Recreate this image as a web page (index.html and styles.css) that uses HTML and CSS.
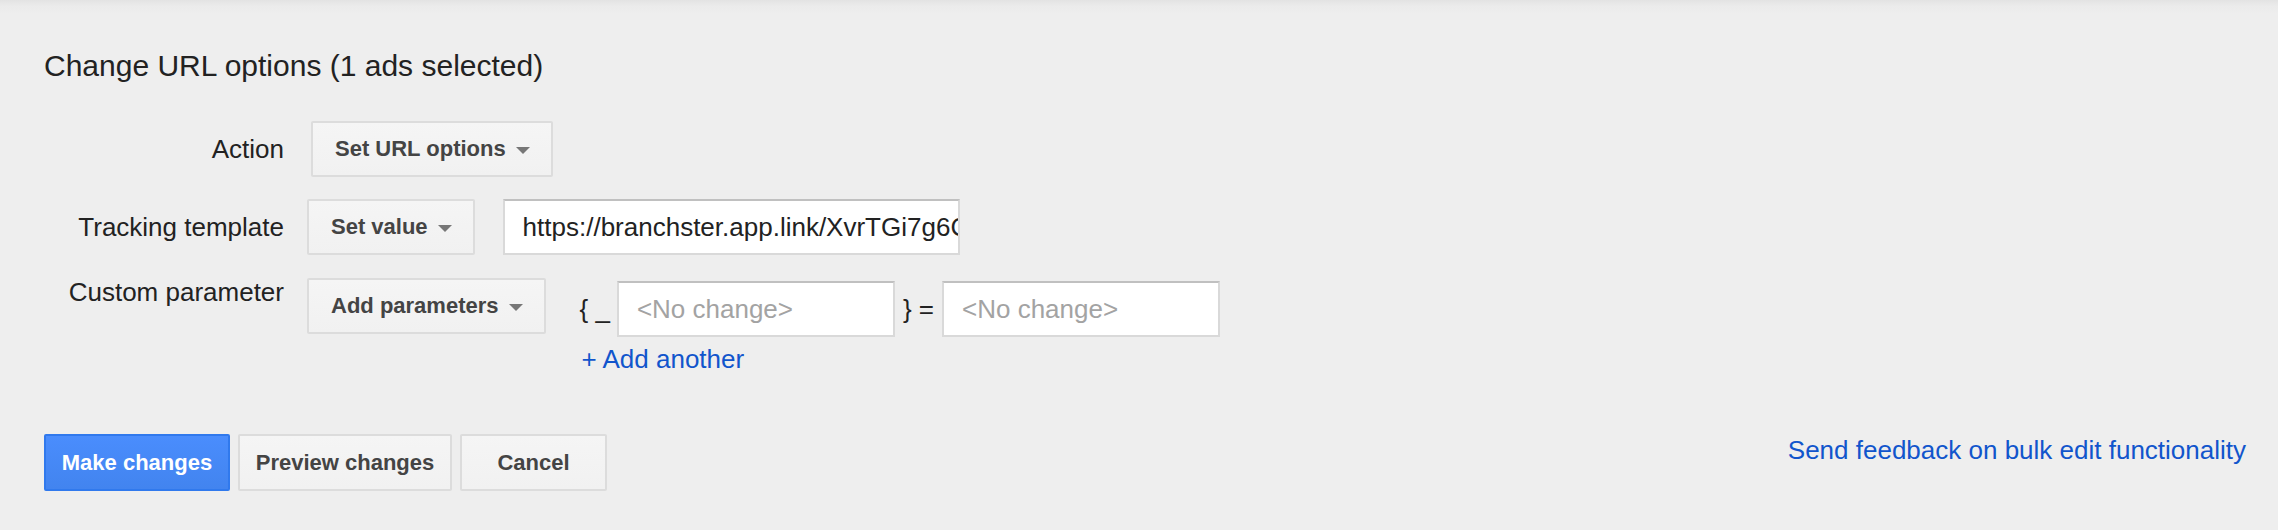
FILE: index.html
```html
<!DOCTYPE html>
<html>
<head>
<meta charset="utf-8">
<link rel="stylesheet" href="styles.css">
</head>
<body>
<div class="panel">
  <h1 class="title">Change URL options (1 ads selected)</h1>
  <div class="form">
    <div class="label label-mid">Action</div>
    <div class="controls">
      <button class="btn btn-dd btn-action">Set URL options <span class="caret"></span></button>
    </div>

    <div class="label label-mid">Tracking template</div>
    <div class="controls">
      <button class="btn btn-dd">Set value <span class="caret"></span></button>
      <div class="field field-url"><span class="field-text">https://branchster.app.link/XvrTGi7g6C1</span></div>
    </div>

    <div class="label label-top">Custom parameter</div>
    <div class="controls controls-top">
      <button class="btn btn-dd">Add parameters <span class="caret"></span></button>
      <div class="params">
        <div class="param-row">
          <span class="brace">{ _</span>
          <div class="field field-param"><span class="placeholder">&lt;No change&gt;</span></div>
          <span class="brace brace-close">} =</span>
          <div class="field field-param"><span class="placeholder">&lt;No change&gt;</span></div>
        </div>
        <a class="link add-link">+ Add another</a>
      </div>
    </div>
  </div>

  <div class="footer">
    <div class="actions">
      <button class="btn btn-primary">Make changes</button>
      <button class="btn btn-footer">Preview changes</button>
      <button class="btn btn-footer btn-cancel">Cancel</button>
    </div>
    <a class="link feedback">Send feedback on bulk edit functionality</a>
  </div>
</div>
</body>
</html>
```

FILE: styles.css
```css
html, body {
  margin: 0;
  padding: 0;
}
body {
  background: #eeeeee;
  font-family: "Liberation Sans", Arial, sans-serif;
  color: #222222;
  width: 2278px;
  height: 530px;
  overflow: hidden;
}
.panel {
  height: 530px;
  box-sizing: border-box;
  background: linear-gradient(#e3e3e3 0px, #ebebeb 6px, #eeeeee 14px, #eeeeee 100%);
  padding: 48px 32px 0 44px;
}
.title {
  margin: 0;
  font-size: 30px;
  font-weight: normal;
  line-height: 36px;
  color: #222;
}
.form {
  display: grid;
  grid-template-columns: 240px auto;
  column-gap: 23px;
  row-gap: 22px;
  margin-top: 37px;
  align-items: center;
}
.label {
  font-size: 26px;
  text-align: right;
  color: #222;
  white-space: nowrap;
}
.label-top {
  align-self: start;
  margin-top: 0px;
}
.controls {
  display: flex;
  align-items: center;
}
.controls-top {
  align-items: flex-start;
  margin-top: 1px;
}
.btn {
  font-family: "Liberation Sans", Arial, sans-serif;
  font-weight: bold;
  font-size: 22px;
  color: #444;
  background: linear-gradient(#f5f5f5, #f1f1f1);
  border: 2px solid #dcdcdc;
  border-radius: 2px;
  height: 56px;
  box-sizing: border-box;
  padding: 0 21px 0 22px;
  display: inline-flex;
  align-items: center;
  margin: 0;
  cursor: default;
}
.btn-action {
  margin-left: 4px;
}
.caret {
  display: inline-block;
  width: 0;
  height: 0;
  border-left: 7px solid transparent;
  border-right: 7px solid transparent;
  border-top: 7px solid #777;
  margin-left: 10px;
  margin-top: 2px;
}
.field {
  height: 56px;
  box-sizing: border-box;
  background: #fff;
  border: 2px solid #d9d9d9;
  border-top-color: #c0c0c0;
  display: flex;
  align-items: center;
  overflow: hidden;
  white-space: nowrap;
  font-size: 26px;
}
.field-url {
  width: 457px;
  margin-left: 28px;
  padding-left: 18px;
  color: #222;
}
.field-text {
  display: block;
}
.params {
  margin-left: 33px;
  margin-top: 3px;
  display: flex;
  flex-direction: column;
}
.param-row {
  display: flex;
  align-items: center;
}
.brace {
  font-size: 26px;
  color: #222;
  margin-right: 7px;
  margin-left: 1px;
}
.brace-close {
  margin-left: 8px;
  margin-right: 8px;
}
.field-param {
  width: 278px;
  padding-left: 18px;
}
.placeholder {
  color: #a3a3a3;
}
.link {
  color: #1155cc;
  font-size: 26px;
  text-decoration: none;
}
.add-link {
  margin-top: 7px;
  margin-left: 3px;
}
.footer {
  display: flex;
  justify-content: space-between;
  align-items: flex-start;
  margin-top: 59px;
}
.actions {
  display: flex;
  gap: 8px;
}
.btn-primary {
  color: #fff;
  background: linear-gradient(#4a8dfd, #4284ef);
  border: 2px solid #3079ed;
  height: 57px;
  width: 186px;
  justify-content: center;
  padding: 0;
}
.btn-footer {
  height: 57px;
  justify-content: center;
  padding: 0;
  width: 214px;
}
.btn-cancel {
  width: 147px;
}
.feedback {
  line-height: 30px;
  margin-top: 1px;
}
```
